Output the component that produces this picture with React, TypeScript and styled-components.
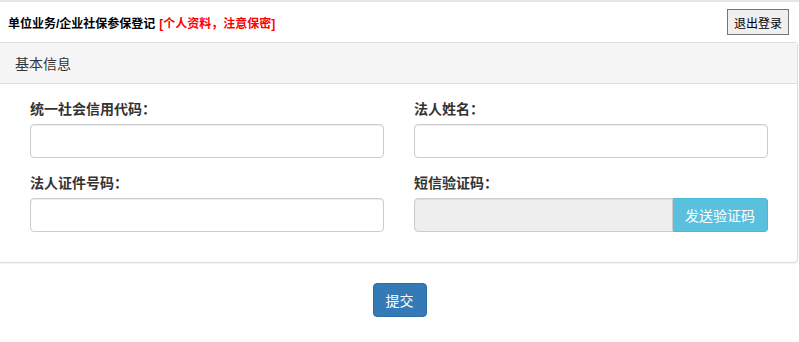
import styled, { createGlobalStyle } from "styled-components";

const GlobalStyle = createGlobalStyle`
  body {
    margin: 0;
    background: #fff;
    font-family: "Liberation Sans", "Noto Sans CJK SC", sans-serif;
    color: #333;
    text-spacing-trim: space-all;
  }
`;

const Page = styled.div`
  border-top: 2px solid #e6e6e6;
`;

const TopBar = styled.div`
  display: flex;
  align-items: center;
  justify-content: space-between;
  height: 40px;
  padding: 0 10px 0 8px;
  box-sizing: border-box;
`;

const Title = styled.div`
  font-size: 12px;
  font-weight: bold;
  color: #000;

  .warn {
    color: #f00;
    margin-left: 4px;
  }
`;

const LogoutButton = styled.button`
  height: 26px;
  padding: 0 6px;
  font-family: inherit;
  font-size: 12px;
  color: #000;
  background: #efefef;
  border: 1px solid #767676;
  border-radius: 0;
`;

const Panel = styled.div`
  margin-right: 1px;
  border: 1px solid #ddd;
  border-left: 0;
  border-radius: 0 4px 4px 0;
  box-shadow: 0 1px 1px rgba(0, 0, 0, 0.05);
`;

const PanelHeading = styled.div`
  height: 40px;
  display: flex;
  align-items: center;
  padding: 0 15px;
  background: #f5f5f5;
  border-bottom: 1px solid #ddd;
  font-size: 14px;
  color: #333;
`;

const PanelBody = styled.div`
  display: grid;
  grid-template-columns: 1fr 1fr;
  column-gap: 30px;
  padding: 15px 29px 15px 30px;
`;

const FormGroup = styled.div`
  display: flex;
  flex-direction: column;
  margin-bottom: 15px;
`;

const Label = styled.label`
  font-size: 14px;
  line-height: 20px;
  font-weight: bold;
  color: #333;
  margin-bottom: 5px;
`;

const Input = styled.input<{ $disabled?: boolean; $joined?: boolean }>`
  box-sizing: border-box;
  width: 100%;
  height: 34px;
  padding: 6px 12px;
  font-size: 14px;
  border: 1px solid #ccc;
  border-radius: ${({ $joined }) => ($joined ? "4px 0 0 4px" : "4px")};
  background: ${({ $disabled }) => ($disabled ? "#eee" : "#fff")};
  box-shadow: inset 0 1px 1px rgba(0, 0, 0, 0.075);
  outline: none;
`;

const InputGroup = styled.div`
  display: flex;
`;

const SendButton = styled.button`
  flex: none;
  height: 34px;
  width: 95px;
  padding: 0;
  font-family: inherit;
  font-size: 14px;
  color: #fff;
  background: #5bc0de;
  border: 1px solid #46b8da;
  border-left: 0;
  border-radius: 0 4px 4px 0;
`;

const Actions = styled.div`
  display: flex;
  justify-content: center;
  padding-top: 20px;
`;

const SubmitButton = styled.button`
  height: 34px;
  padding: 0 12px;
  font-family: inherit;
  font-size: 14px;
  color: #fff;
  background: #337ab7;
  border: 1px solid #2e6da4;
  border-radius: 4px;
`;

const fields = [
  { label: "统一社会信用代码：" },
  { label: "法人姓名：" },
  { label: "法人证件号码：" },
];

export default function App() {
  return (
    <Page>
      <GlobalStyle />
      <TopBar>
        <Title>
          单位业务/企业社保参保登记<span className="warn">[个人资料，注意保密]</span>
        </Title>
        <LogoutButton>退出登录</LogoutButton>
      </TopBar>
      <Panel>
        <PanelHeading>基本信息</PanelHeading>
        <PanelBody>
          {fields.map((f) => (
            <FormGroup key={f.label}>
              <Label>{f.label}</Label>
              <Input />
            </FormGroup>
          ))}
          <FormGroup>
            <Label>短信验证码：</Label>
            <InputGroup>
              <Input $disabled $joined disabled />
              <SendButton>发送验证码</SendButton>
            </InputGroup>
          </FormGroup>
        </PanelBody>
      </Panel>
      <Actions>
        <SubmitButton>提交</SubmitButton>
      </Actions>
    </Page>
  );
}
